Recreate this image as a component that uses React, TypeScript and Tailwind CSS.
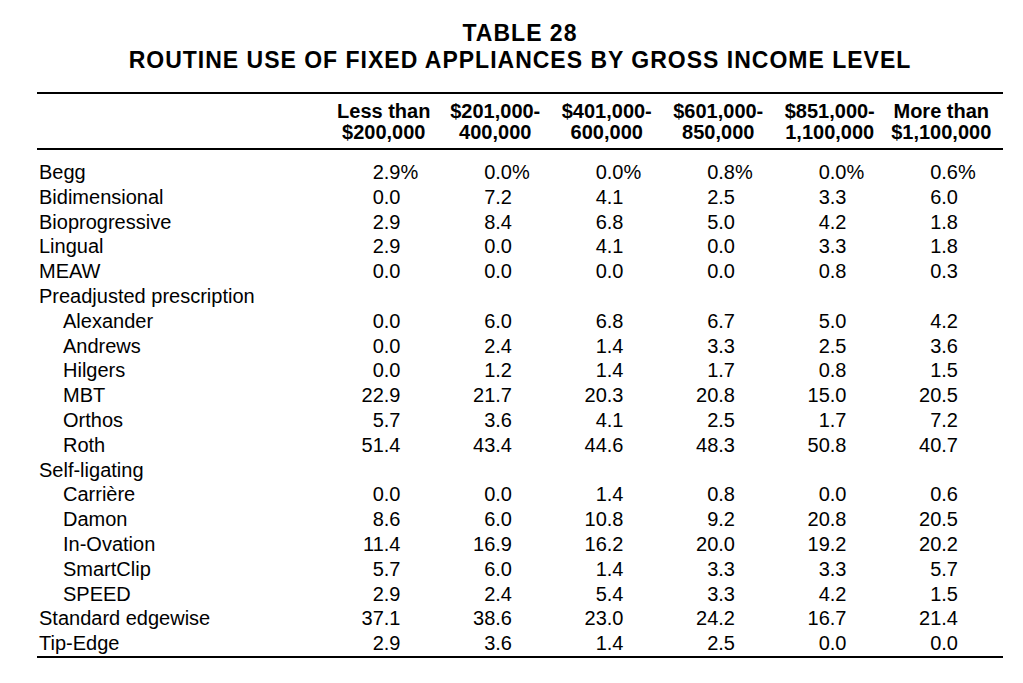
import React from "react";

type Row = { label: string; indent?: boolean; values?: string[]; pct?: boolean };

const rows: Row[] = [
  { label: "Begg", values: ["2.9", "0.0", "0.0", "0.8", "0.0", "0.6"], pct: true },
  { label: "Bidimensional", values: ["0.0", "7.2", "4.1", "2.5", "3.3", "6.0"] },
  { label: "Bioprogressive", values: ["2.9", "8.4", "6.8", "5.0", "4.2", "1.8"] },
  { label: "Lingual", values: ["2.9", "0.0", "4.1", "0.0", "3.3", "1.8"] },
  { label: "MEAW", values: ["0.0", "0.0", "0.0", "0.0", "0.8", "0.3"] },
  { label: "Preadjusted prescription" },
  { label: "Alexander", indent: true, values: ["0.0", "6.0", "6.8", "6.7", "5.0", "4.2"] },
  { label: "Andrews", indent: true, values: ["0.0", "2.4", "1.4", "3.3", "2.5", "3.6"] },
  { label: "Hilgers", indent: true, values: ["0.0", "1.2", "1.4", "1.7", "0.8", "1.5"] },
  { label: "MBT", indent: true, values: ["22.9", "21.7", "20.3", "20.8", "15.0", "20.5"] },
  { label: "Orthos", indent: true, values: ["5.7", "3.6", "4.1", "2.5", "1.7", "7.2"] },
  { label: "Roth", indent: true, values: ["51.4", "43.4", "44.6", "48.3", "50.8", "40.7"] },
  { label: "Self-ligating" },
  { label: "Carrière", indent: true, values: ["0.0", "0.0", "1.4", "0.8", "0.0", "0.6"] },
  { label: "Damon", indent: true, values: ["8.6", "6.0", "10.8", "9.2", "20.8", "20.5"] },
  { label: "In-Ovation", indent: true, values: ["11.4", "16.9", "16.2", "20.0", "19.2", "20.2"] },
  { label: "SmartClip", indent: true, values: ["5.7", "6.0", "1.4", "3.3", "3.3", "5.7"] },
  { label: "SPEED", indent: true, values: ["2.9", "2.4", "5.4", "3.3", "4.2", "1.5"] },
  { label: "Standard edgewise", values: ["37.1", "38.6", "23.0", "24.2", "16.7", "21.4"] },
  { label: "Tip-Edge", values: ["2.9", "3.6", "1.4", "2.5", "0.0", "0.0"] },
];

const headers: [string, string][] = [
  ["Less than", "$200,000"],
  ["$201,000-", "400,000"],
  ["$401,000-", "600,000"],
  ["$601,000-", "850,000"],
  ["$851,000-", "1,100,000"],
  ["More than", "$1,100,000"],
];

export default function App() {
  return (
    <div
      className="w-[1023px] h-[683px] bg-white text-black"
      style={{ fontFamily: '"Liberation Sans", Arial, Helvetica, sans-serif' }}
    >
      <div className="ml-[37px] w-[966px] pt-[20px]">
        <div className="text-center font-bold text-[23px] leading-[26.5px] tracking-[1px]">
          <div>TABLE 28</div>
          <div>ROUTINE USE OF FIXED APPLIANCES BY GROSS INCOME LEVEL</div>
        </div>
        <div className="mt-[19px] h-[2px] bg-black" />
        <div className="grid grid-cols-[291px_repeat(6,111.5px)] pt-[7px] pb-[5px] text-[20px] font-bold leading-[21px]">
          <div />
          {headers.map(([a, b]) => (
            <div key={a + b} className="text-center whitespace-nowrap">
              <div>{a}</div>
              <div>{b}</div>
            </div>
          ))}
        </div>
        <div className="h-[2px] bg-black" />
        <div className="pt-[10px] text-[20px] leading-[24.8px]">
          {rows.map((r) => (
            <div key={r.label} className="grid grid-cols-[291px_repeat(6,111.5px)]">
              <div className={r.indent ? "pl-[26px] whitespace-nowrap" : "pl-[2px] whitespace-nowrap"}>
                {r.label}
              </div>
              {r.values
                ? r.values.map((v, i) => (
                    <div key={i} className="text-right pr-[39px] whitespace-nowrap">
                      {v}
                      {r.pct ? <span className="inline-block w-0">%</span> : null}
                    </div>
                  ))
                : null}
            </div>
          ))}
        </div>
        <div className="h-[2px] bg-black" />
      </div>
    </div>
  );
}
